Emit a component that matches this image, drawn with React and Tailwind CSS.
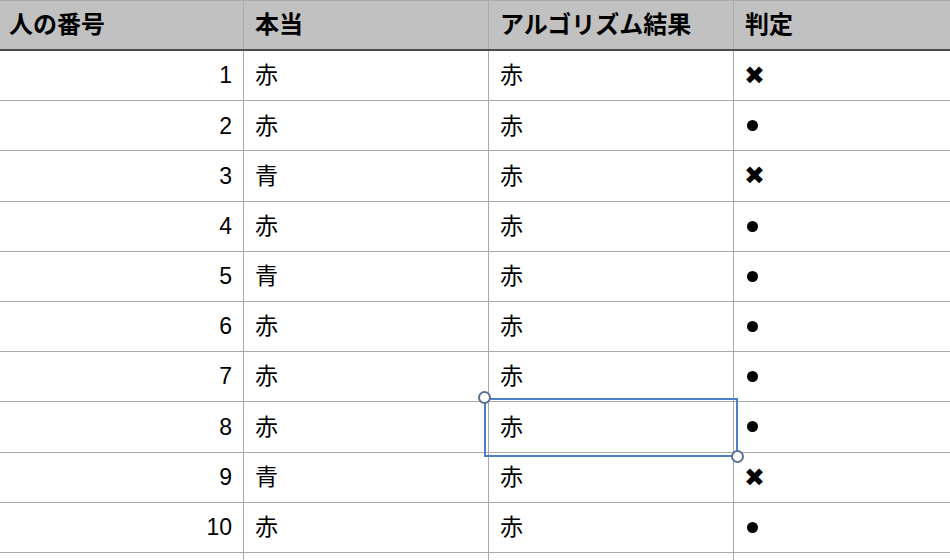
import React from 'react';

const ROWS = [
  [1, '赤', '赤', 'x'],
  [2, '赤', '赤', 'o'],
  [3, '青', '赤', 'x'],
  [4, '赤', '赤', 'o'],
  [5, '青', '赤', 'o'],
  [6, '赤', '赤', 'o'],
  [7, '赤', '赤', 'o'],
  [8, '赤', '赤', 'o'],
  [9, '青', '赤', 'x'],
  [10, '赤', '赤', 'o'],
  ['', '', '', ''],
];

const FONT = { fontFamily: '"Liberation Sans", "Noto Sans CJK JP", sans-serif' };
const COLS = 'grid grid-cols-[244px_245px_245px_216px]';

function Mark({ kind }) {
  if (kind === 'x') return <span className="text-[25px] leading-none -ml-[1px]">✖</span>;
  if (kind === 'o') return <span className="block w-[11px] h-[11px] rounded-full bg-black ml-[2px]" />;
  return null;
}

export default function App() {
  return (
    <div className="w-[950px] h-[560px] overflow-hidden bg-white relative text-black" style={FONT}>
      <div className={`${COLS} h-[51px] bg-[#c0c1c0] border-t border-[#a9a9a9] border-b-2 border-b-[#4a4a4a] text-[24px] font-bold`}>
        <div className="flex items-center pl-[9px] border-r border-[#a9a9a9]">人の番号</div>
        <div className="flex items-center pl-[11px] border-r border-[#a9a9a9]">本当</div>
        <div className="flex items-center pl-[11px] border-r border-[#a9a9a9]">アルゴリズム結果</div>
        <div className="flex items-center pl-[11px]">判定</div>
      </div>
      {ROWS.map(([n, a, b, m], i) => (
        <div
          key={i}
          className={`${COLS} h-[50.2px] border-b border-[#a9a9a9] text-[23px]`}
        >
          <div className="flex items-center justify-end pr-[11px] border-r border-[#a9a9a9] text-[23px]">{n}</div>
          <div className="flex items-center pl-[11px] border-r border-[#a9a9a9]">{a}</div>
          <div className="flex items-center pl-[11px] border-r border-[#a9a9a9]">{b}</div>
          <div className="flex items-center pl-[11px]">
            <Mark kind={m} />
          </div>
        </div>
      ))}
      <div className="absolute left-[484px] top-[398px] w-[254px] h-[59px] border-2 border-[#4a80c8]" />
      <div className="absolute left-[478px] top-[391px] w-[13px] h-[13px] rounded-full bg-white border-2 border-[#5c6f95]" />
      <div className="absolute left-[731px] top-[450px] w-[13px] h-[13px] rounded-full bg-white border-2 border-[#5c6f95]" />
    </div>
  );
}
